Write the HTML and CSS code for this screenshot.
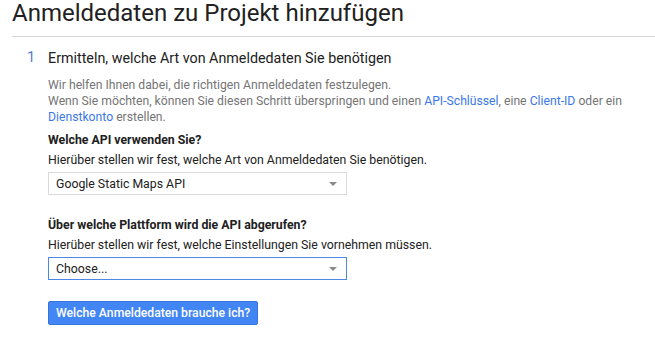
FILE: index.html
```html
<!DOCTYPE html>
<html lang="de">
<head>
<meta charset="utf-8">
<link rel="stylesheet" href="styles.css">
</head>
<body>
<div class="page">
  <h1 class="title">Anmeldedaten zu Projekt hinzufügen</h1>
  <div class="divider"></div>
  <div class="step">
    <div class="step-num">1</div>
    <div class="step-body">
      <div class="step-title">Ermitteln, welche Art von Anmeldedaten Sie benötigen</div>
      <p class="desc">Wir helfen Ihnen dabei, die richtigen Anmeldedaten festzulegen.<br>Wenn Sie möchten, können Sie diesen Schritt überspringen und einen <a class="link">API-Schlüssel</a>, eine <a class="link">Client-ID</a> oder ein <a class="link">Dienstkonto</a> erstellen.</p>

      <div class="field">
        <div class="label">Welche API verwenden Sie?</div>
        <div class="hint">Hierüber stellen wir fest, welche Art von Anmeldedaten Sie benötigen.</div>
        <div class="select"><span>Google Static Maps API</span><span class="arrow"></span></div>
      </div>

      <div class="field">
        <div class="label">Über welche Plattform wird die API abgerufen?</div>
        <div class="hint">Hierüber stellen wir fest, welche Einstellungen Sie vornehmen müssen.</div>
        <div class="select focused"><span>Choose...</span><span class="arrow"></span></div>
      </div>

      <button class="btn">Welche Anmeldedaten brauche ich?</button>
    </div>
  </div>
</div>
</body>
</html>
```
FILE: styles.css
```css
html, body {
  margin: 0;
  padding: 0;
  background: #ffffff;
}
body {
  font-family: Roboto, "Liberation Sans", Arial, sans-serif;
  color: #212121;
}
.page {
  padding: 0 0 0 12px;
}
.title {
  margin: 0;
  font-size: 24px;
  font-weight: 400;
  line-height: 26px;
  color: #212121;
}
.divider {
  margin-top: 10px;
  height: 1px;
  background: #d6d6d6;
}
.step {
  display: flex;
  padding-top: 11px;
}
.step-num {
  flex: none;
  width: 36px;
  padding-left: 15px;
  box-sizing: border-box;
  font-size: 14.5px;
  line-height: 20px;
  color: #4a7ecf;
}
.step-body {
  display: flex;
  flex-direction: column;
  align-items: flex-start;
}
.step-title {
  font-size: 14.3px;
  line-height: 20px;
  color: #212121;
}
.desc {
  margin: 9px 0 0;
  font-size: 12.2px;
  line-height: 16px;
  color: #757575;
}
.link {
  color: #3b78e7;
  text-decoration: none;
}
.field {
  margin-top: 6px;
  display: flex;
  flex-direction: column;
}
.field + .field {
  margin-top: 21px;
}
.label {
  font-size: 12.3px;
  line-height: 18px;
  font-weight: 700;
  color: #212121;
}
.hint {
  margin-top: 2px;
  font-size: 12.3px;
  line-height: 18px;
  color: #212121;
}
.select {
  margin-top: 3px;
  width: 299px;
  height: 23px;
  box-sizing: border-box;
  border: 1px solid #d9d9d9;
  display: flex;
  align-items: center;
  justify-content: space-between;
  padding: 0 9px 0 7px;
  font-size: 12.3px;
  color: #212121;
}
.select.focused {
  border-color: #4d87e6;
}
.arrow {
  width: 0;
  height: 0;
  border-left: 4px solid transparent;
  border-right: 4px solid transparent;
  border-top: 4px solid #8a8a8a;
}
.btn {
  margin-top: 21px;
  height: 24px;
  padding: 0 7px;
  border: 1px solid #3a73d9;
  border-radius: 2px;
  background: #4285f4;
  color: #ffffff;
  font-family: Roboto, "Liberation Sans", Arial, sans-serif;
  font-size: 12.2px;
  font-weight: 500;
  line-height: 22px;
}
```
